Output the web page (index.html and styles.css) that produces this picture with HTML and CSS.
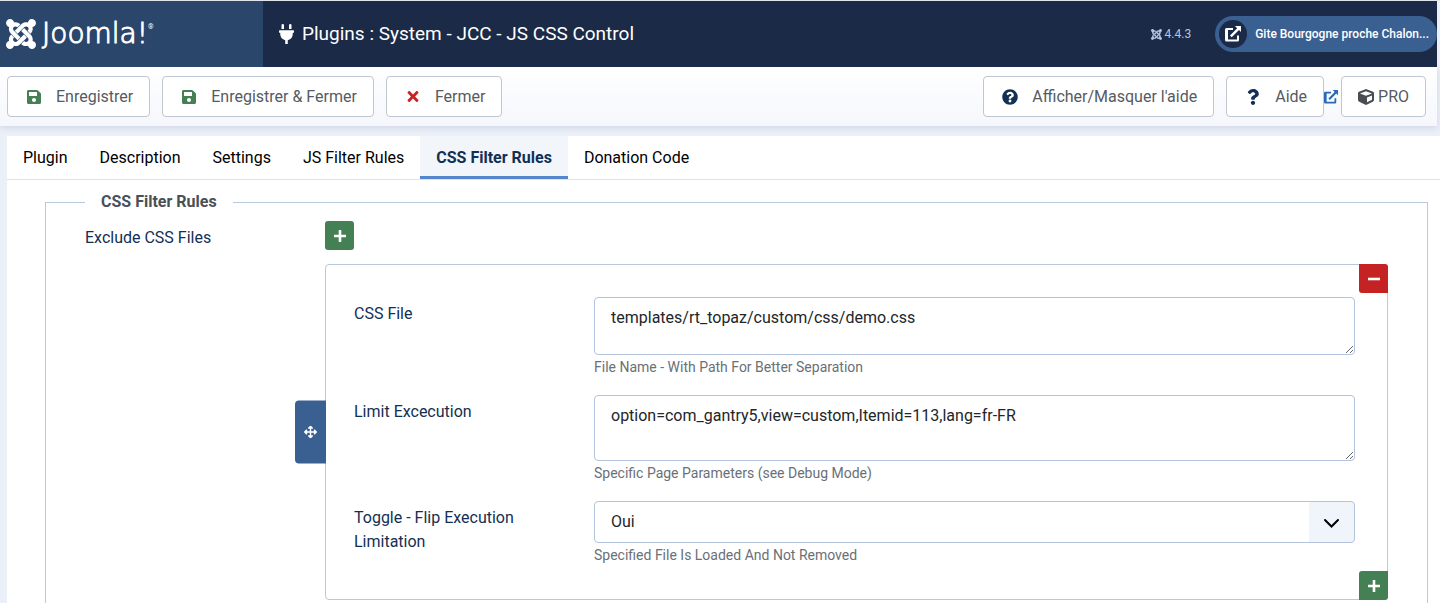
FILE: index.html
```html
<!DOCTYPE html>
<html lang="fr">
<head>
  <meta charset="UTF-8" />
  <meta name="viewport" content="width=device-width, initial-scale=1" />
  <title>Plugins : System - JCC - JS CSS Control</title>
  <link rel="stylesheet" href="styles.css">
</head>
<body>

  <!-- Icon shapes -->
  <svg class="sprite" aria-hidden="true">
    <symbol id="joomla" viewBox="0 32 448 448"><path d="M.6 92.1C.6 58.8 27.4 32 60.4 32c30 0 54.5 21.9 59.2 50.2 32.6-7.6 67.1.6 96.5 30l-44.3 44.3c-20.5-20.5-42.6-16.3-55.4-3.5-14.3 14.3-14.3 37.9 0 52.2l99.5 99.5-44 44.3c-87.7-87.2-49.7-49.7-99.8-99.7-26.8-26.5-35-64.8-24.8-98.9C20.4 144.6.6 120.7.6 92.1zm129.5 116.4l44.3 44.3c10-10 89.7-89.7 99.7-99.8 14.3-14.3 37.6-14.3 51.9 0 12.8 12.8 17 35-3.5 55.4l44 44.3c31.2-31.2 38.5-67.6 28.9-101.2 29.2-4.1 51.9-29.2 51.9-59.5 0-33.2-26.8-60.1-59.8-60.1-30.3 0-55.4 22.5-59.5 51.6-33.8-9.9-71.7-1.5-98.3 25.1-18.3 19.1-71.1 71.5-99.6 99.9zm266.3 152.2c8.2-32.7-.9-68.5-26.3-93.9-11.8-12.2 5 4.7-99.5-99.7l-44.3 44.3 99.7 99.7c14.3 14.3 14.3 37.6 0 51.9-12.8 12.8-35 17-55.4-3.5l-44 44.3c27.6 30.2 68 38.8 102.7 28 5.5 27.4 29.7 48.1 58.9 48.1 33 0 59.8-26.8 59.8-60.1 0-30.2-22.5-55-51.6-59.1zm-84.3-53.1l-44-44.3c-87 86.4-50.4 50.4-99.7 99.8-14.3 14.3-37.6 14.3-51.9 0-13.1-13.4-16.9-35.3 3.2-55.4l-44-44.3c-30.2 30.2-38 65.2-29.5 98.3-26.7 6-46.2 29.9-46.2 58.2C0 453.2 26.8 480 59.8 480c28.6 0 52.5-19.8 58.6-46.7 32.7 8.2 68.5-.6 94.2-26 32.1-32 12.2-12.4 99.5-99.7z"/></symbol>
    <symbol id="plug" viewBox="0 0 384 512"><path d="M320,32a32,32,0,0,0-64,0v96h64Zm48,128H16A16,16,0,0,0,0,176v32a16,16,0,0,0,16,16H32v32A160.07,160.07,0,0,0,160,412.8V512h64V412.8A160.07,160.07,0,0,0,352,256V224h16a16,16,0,0,0,16-16V176A16,16,0,0,0,368,160ZM128,32a32,32,0,0,0-64,0v96h64Z"/></symbol>
    <symbol id="save" viewBox="0 32 448 448"><path d="M433.941 129.941l-83.882-83.882A48 48 0 0 0 316.118 32H48C21.49 32 0 53.49 0 80v352c0 26.51 21.49 48 48 48h352c26.51 0 48-21.49 48-48V163.882a48 48 0 0 0-14.059-33.941zM224 416c-35.346 0-64-28.654-64-64 0-35.346 28.654-64 64-64s64 28.654 64 64c0 35.346-28.654 64-64 64zm96-304.52V212c0 6.627-5.373 12-12 12H76c-6.627 0-12-5.373-12-12V108c0-6.627 5.373-12 12-12h228.52c3.183 0 6.235 1.264 8.485 3.515l3.48 3.48A11.996 11.996 0 0 1 320 111.48z"/></symbol>
    <symbol id="times" viewBox="0 80 352 352"><path d="M242.72 256l100.07-100.07c12.28-12.28 12.28-32.19 0-44.48l-22.24-22.24c-12.28-12.28-32.19-12.28-44.48 0L176 189.28 75.93 89.21c-12.28-12.28-32.19-12.28-44.48 0L9.21 111.45c-12.28 12.28-12.28 32.19 0 44.48L109.28 256 9.21 356.07c-12.28 12.28-12.28 32.19 0 44.48l22.24 22.24c12.28 12.28 32.2 12.28 44.48 0L176 322.72l100.07 100.07c12.28 12.28 32.2 12.28 44.48 0l22.24-22.24c12.28-12.28 12.28-32.19 0-44.48L242.72 256z"/></symbol>
    <symbol id="question-circle" viewBox="0 0 512 512"><path d="M504 256c0 136.997-111.043 248-248 248S8 392.997 8 256C8 119.083 119.043 8 256 8s248 111.083 248 248zM262.655 90c-54.497 0-89.255 22.957-116.549 63.758-3.536 5.286-2.353 12.415 2.715 16.258l34.699 26.31c5.205 3.947 12.621 3.008 16.665-2.122 17.864-22.658 30.113-35.797 57.303-35.797 20.429 0 45.698 13.148 45.698 32.958 0 14.976-12.363 22.667-32.534 33.976C247.128 238.528 216 254.941 216 296v4c0 6.627 5.373 12 12 12h56c6.627 0 12-5.373 12-12v-1.333c0-28.462 83.186-29.647 83.186-106.667 0-58.002-60.165-102-116.531-102zM256 338c-25.365 0-46 20.635-46 46 0 25.364 20.635 46 46 46s46-20.636 46-46c0-25.365-20.635-46-46-46z"/></symbol>
    <symbol id="question" viewBox="0 0 384 512"><path d="M202.021 0C122.202 0 70.503 32.703 29.914 91.026c-7.363 10.58-5.093 25.086 5.178 32.874l43.138 32.709c10.373 7.865 25.132 6.026 33.253-4.148 25.049-31.381 43.63-49.449 82.757-49.449 30.764 0 68.816 19.799 68.816 49.631 0 22.552-18.617 34.134-48.993 51.164-35.423 19.86-82.299 44.576-82.299 106.405V320c0 13.255 10.745 24 24 24h72.471c13.255 0 24-10.745 24-24v-5.773c0-42.86 125.268-44.645 125.268-160.627C377.504 66.256 286.902 0 202.021 0zM192 373.459c-38.196 0-69.271 31.075-69.271 69.271 0 38.195 31.075 69.27 69.271 69.27s69.271-31.075 69.271-69.271-31.075-69.27-69.271-69.27z"/></symbol>
    <symbol id="cube" viewBox="0 0 512 512"><path d="M239.1 6.3l-208 78c-18.7 7-31.1 25-31.1 45v225.1c0 18.2 10.3 34.8 26.5 42.9l208 104c13.5 6.8 29.4 6.8 42.9 0l208-104c16.3-8.1 26.5-24.8 26.5-42.9V129.3c0-20-12.4-37.9-31.1-44.9l-208-78C262 2.2 250 2.2 239.1 6.3zM256 68.4l192 72v1.1l-192 78-192-78v-1.1l192-72zm32 356V275.5l160-65v133.9l-160 80z"/></symbol>
    <symbol id="external" viewBox="0 0 16 16"><path d="M1.5 2H8v2H3v9.500h9V9.500h2v4.500a1.500 1.500 0 0 1-1.500 1.500h-11A1.500 1.500 0 0 1 0 14V3.500A1.500 1.500 0 0 1 1.500 2zM10 0h5.500a.5.5 0 0 1 .5.5V6l-2-2-7.300 7.300-1.700-1.700L12.200 2.300z"/></symbol>
    <symbol id="plus" viewBox="0 0 12 12"><path d="M4.700 0h2.600v4.700H12v2.600H7.300V12H4.700V7.300H0V4.700h4.700z"/></symbol>
    <symbol id="minus" viewBox="0 0 12 12"><path d="M0 4.700h12v2.600H0z"/></symbol>
    <symbol id="arrows" viewBox="0 0 512 512"><path d="M352.201 425.775l-79.196 79.196c-9.373 9.373-24.568 9.373-33.941 0l-79.196-79.196c-15.119-15.119-4.411-40.971 16.971-40.970h51.162L228 284H127.196v51.162c0 21.382-25.851 32.090-40.971 16.971L7.029 272.937c-9.373-9.373-9.373-24.569 0-33.941L86.225 159.800c15.119-15.119 40.971-4.411 40.971 16.971V228H228V127.196h-51.230c-21.382 0-32.090-25.851-16.971-40.971l79.196-79.196c9.373-9.373 24.568-9.373 33.941 0l79.196 79.196c15.119 15.119 4.411 40.971-16.971 40.971h-51.162V228h100.804v-51.162c0-21.382 25.851-32.090 40.970-16.971l79.196 79.196c9.373 9.373 9.373 24.569 0 33.941L425.773 352.200c-15.119 15.119-40.971 4.411-40.970-16.971V284H284v100.804h51.230c21.382 0 32.090 25.851 16.971 40.971z"/></symbol>
  </svg>

  <!-- Header -->
  <header class="header">
    <a class="brand" href="#">
      <svg class="brand-icon"><use href="#joomla"/></svg>
      <span class="brand-name">Joomla!</span><span class="brand-mark">®</span>
    </a>
    <h1 class="page-title"><svg class="plug-icon"><use href="#plug"/></svg>Plugins : System - JCC - JS CSS Control</h1>
    <div class="version"><svg class="version-icon"><use href="#joomla"/></svg>4.4.3</div>
    <a class="site-link" href="#">
      <span class="site-icon"><svg><use href="#external"/></svg></span>
      Gite Bourgogne proche Chalon...
    </a>
  </header>

  <!-- Toolbar -->
  <div class="toolbar">
    <button class="btn" type="button"><svg class="icon green"><use href="#save"/></svg>Enregistrer</button>
    <button class="btn" type="button"><svg class="icon green"><use href="#save"/></svg>Enregistrer &amp; Fermer</button>
    <button class="btn" type="button"><svg class="icon icon-times"><use href="#times"/></svg>Fermer</button>
    <button class="btn push" type="button"><svg class="icon icon-help"><use href="#question-circle"/></svg>Afficher/Masquer l'aide</button>
    <div class="help-group">
      <button class="btn" type="button"><svg class="icon icon-help"><use href="#question"/></svg>Aide</button>
      <a class="help-link" href="#" aria-label="PRO"><svg><use href="#external"/></svg></a>
      <button class="btn btn-pro" type="button"><svg class="icon-cube"><use href="#cube"/></svg>PRO</button>
    </div>
  </div>

  <main class="content">
    <div class="tabs" role="tablist">
      <button class="tab" type="button" role="tab">Plugin</button>
      <button class="tab" type="button" role="tab">Description</button>
      <button class="tab" type="button" role="tab">Settings</button>
      <button class="tab" type="button" role="tab">JS Filter Rules</button>
      <button class="tab active" type="button" role="tab" aria-selected="true">CSS Filter Rules</button>
      <button class="tab" type="button" role="tab">Donation Code</button>
    </div>

    <form class="panel">
      <fieldset class="options">
        <legend>CSS Filter Rules</legend>
        <div class="row">
          <div class="label">Exclude CSS Files</div>
          <div class="controls">
            <button class="square add" type="button" aria-label="Ajouter"><svg><use href="#plus"/></svg></button>

            <!-- Repeatable group -->
            <div class="group">
              <button class="square remove corner-top" type="button" aria-label="Supprimer"><svg><use href="#minus"/></svg></button>
              <button class="move" type="button" aria-label="Déplacer"><svg><use href="#arrows"/></svg></button>
              <button class="square add corner-bottom" type="button" aria-label="Ajouter"><svg><use href="#plus"/></svg></button>

              <div class="row">
                <label class="label" for="cssFile">CSS File</label>
                <div class="controls">
                  <textarea class="field" id="cssFile" spellcheck="false">templates/rt_topaz/custom/css/demo.css</textarea>
                  <small class="hint">File Name - With Path For Better Separation</small>
                </div>
              </div>
              <div class="row">
                <label class="label" for="limit">Limit Excecution</label>
                <div class="controls">
                  <textarea class="field field-tall" id="limit" spellcheck="false">option=com_gantry5,view=custom,Itemid=113,lang=fr-FR</textarea>
                  <small class="hint">Specific Page Parameters (see Debug Mode)</small>
                </div>
              </div>
              <div class="row">
                <label class="label" for="toggle">Toggle - Flip Execution Limitation</label>
                <div class="controls">
                  <select class="field select" id="toggle">
                    <option>Oui</option>
                    <option>Non</option>
                  </select>
                  <small class="hint">Specified File Is Loaded And Not Removed</small>
                </div>
              </div>
            </div>
          </div>
        </div>
      </fieldset>
    </form>
  </main>

</body>
</html>
```
FILE: styles.css
```css
* {
  box-sizing: border-box;
}

html {
  overflow: hidden;
}

body {
  margin: 0;
  font-family: Roboto, "Liberation Sans", sans-serif;
  font-size: 16px;
  line-height: 24px;
  color: #132f53;
  background-color: #ebeff7;
  border-top: 1px solid #dfe5ea;
}

button, textarea, select {
  font: inherit;
}

svg {
  fill: currentColor;
  flex-shrink: 0;
}

.sprite {
  display: none;
}

/* Header */
.header {
  display: flex;
  align-items: center;
  height: 66px;
  margin-right: 3px;
  background-color: #1a2a47;
  color: white;
}

.brand {
  display: flex;
  align-items: center;
  align-self: stretch;
  width: 263px;
  padding-left: 6px;
  background-color: #2a466b;
  color: white;
  text-decoration: none;
}

.brand-icon {
  width: 30px;
  height: 30px;
  margin-right: 6px;
}

.brand-name {
  font-family: "DejaVu Sans", sans-serif;
  font-weight: 200;
  font-size: 28px;
  -webkit-text-stroke: 1px white;
}

.brand-mark {
  align-self: flex-start;
  margin-top: 14px;
  font-size: 7px;
}

.page-title {
  display: flex;
  align-items: center;
  margin: 0 auto 0 16px;
  font-size: 19px;
  font-weight: 400;
}

.plug-icon {
  width: 15px;
  height: 20px;
  margin-right: 8px;
}

.version {
  display: flex;
  align-items: center;
  gap: 3px;
  margin-right: 24px;
  font-size: 12px;
  color: #b4c4dc;
}

.version-icon {
  width: 11px;
  height: 11px;
}

.site-link {
  display: flex;
  align-items: center;
  height: 36px;
  padding: 0 8px 0 4px;
  border-radius: 18px;
  background-color: #3a6092;
  color: white;
  font-size: 12px;
  font-weight: 500;
  text-decoration: none;
}

.site-icon {
  display: flex;
  align-items: center;
  justify-content: center;
  width: 28px;
  height: 28px;
  margin-right: 8px;
  border-radius: 50%;
  background-color: #1a2a47;
}

.site-icon svg {
  width: 16px;
  height: 16px;
}

/* Toolbar */
.toolbar {
  display: flex;
  gap: 12px;
  margin-right: 3px;
  padding: 9px 11px 9px 7px;
  background: linear-gradient(#ffffff, #f5f7fc);
  box-shadow: 0 2px 6px rgba(60, 80, 160, 0.15);
}

.btn {
  display: flex;
  align-items: center;
  height: 41px;
  padding: 0 16px;
  border: 1px solid #bfc7d1;
  border-radius: 4px;
  background-color: white;
  color: #555b62;
  cursor: pointer;
}

.icon {
  width: 20px;
  height: 14px;
  margin-right: 12px;
}

.green {
  color: #448054;
}

.icon-times {
  height: 11px;
  color: #c92424;
}

.icon-help {
  height: 16px;
  color: #132f53;
}

.push {
  margin-left: auto;
}

.help-group {
  display: flex;
  align-items: center;
}

.help-link {
  display: flex;
  margin-right: 3px;
  color: #2a69b8;
}

.help-link svg {
  width: 14px;
  height: 14px;
}

.icon-cube {
  width: 16px;
  height: 16px;
  margin-right: 4px;
  color: #484d53;
}

/* Content */
.content {
  margin: 10px 0 0 7px;
  background-color: white;
}

.tabs {
  display: flex;
  border-bottom: 1px solid #dbe4ec;
}

.tab {
  height: 43px;
  padding: 0 16px;
  border: 0;
  background: none;
  color: black;
  cursor: pointer;
}

.tab.active {
  background-color: #f2f6fa;
  color: #132f53;
  font-weight: 700;
  box-shadow: inset 0 -3px #5585cb;
}

.panel {
  padding: 10px 12px 16px 38px;
}

.options {
  min-width: 0;
  margin: 0;
  padding: 7px 39px 28px;
  border: 1px solid #b9c8dc;
}

.options legend {
  padding: 0 16px;
  font-weight: 700;
  color: #495057;
}

.row {
  display: flex;
}

.label {
  flex: 0 0 240px;
  padding: 5px 24px 0 0;
}

.controls {
  flex: 1;
  min-width: 0;
}

/* Repeatable group */
.group {
  position: relative;
  display: grid;
  gap: 16px;
  margin-top: 14px;
  padding: 32px 32px 32px 28px;
  border: 1px solid #b9c8dc;
  border-radius: 4px;
}

.square {
  display: flex;
  align-items: center;
  justify-content: center;
  width: 29px;
  height: 29px;
  padding: 0;
  border: 0;
  border-radius: 3px;
  color: white;
  cursor: pointer;
}

.square svg {
  width: 12px;
  height: 12px;
}

.add {
  background-color: #448054;
}

.remove {
  background-color: #c52223;
}

.corner-top {
  position: absolute;
  top: -1px;
  right: -1px;
  border-radius: 0 3px 0 3px;
}

.corner-bottom {
  position: absolute;
  right: -1px;
  bottom: -1px;
  border-radius: 3px 0 3px 0;
}

.move {
  position: absolute;
  top: 50%;
  right: 100%;
  display: flex;
  align-items: center;
  justify-content: center;
  width: 31px;
  height: 63px;
  padding: 0;
  border: 0;
  border-radius: 4px 0 0 4px;
  background-color: #3a6092;
  color: white;
  transform: translateY(-50%);
  cursor: move;
}

.move svg {
  width: 13px;
  height: 13px;
}

.field {
  display: block;
  width: 100%;
  height: 58px;
  padding: 8px 16px;
  border: 1px solid #b4c3dc;
  border-radius: 4px;
  background-color: white;
  color: #22262a;
  resize: vertical;
}

.field-tall {
  height: 66px;
}

.select {
  height: 42px;
  appearance: none;
  background-image: url("data:image/svg+xml,%3Csvg xmlns='http://www.w3.org/2000/svg' viewBox='0 0 45 40'%3E%3Cpath fill='%23f0f4fb' d='M0 0h45v40H0z'/%3E%3Cpath d='M16 18l6.500 6.500L29 18' fill='none' stroke='%23000' stroke-width='2' stroke-linecap='round'/%3E%3C/svg%3E");
  background-position: right center;
  background-repeat: no-repeat;
  background-size: 45px 40px;
}

.hint {
  display: block;
  padding: 2px 0 1px;
  font-size: 14px;
  line-height: 21px;
  color: #6a7077;
}
```
